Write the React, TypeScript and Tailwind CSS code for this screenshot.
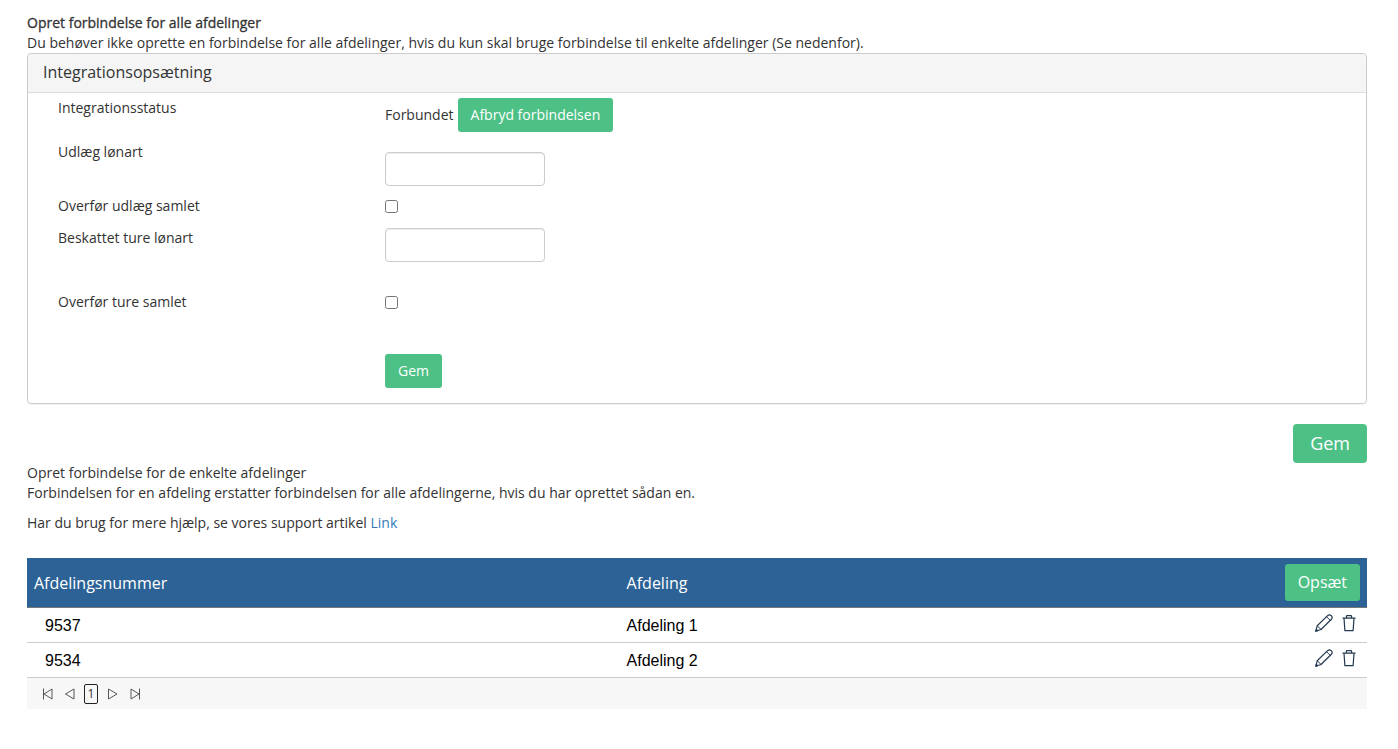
import type { ReactNode } from 'react';

const departments = [
  { id: '9537', name: 'Afdeling 1' },
  { id: '9534', name: 'Afdeling 2' },
];

const inputClass =
  'block h-[34px] w-40 rounded border border-[#cccccc] bg-white px-3 shadow-[inset_0_1px_1px_rgba(0,0,0,0.075)]';

const pagerClass = 'flex h-5 w-[14px] items-center justify-center text-[#444444]';

interface FormRowProps {
  label?: string;
  htmlFor?: string;
  className?: string;
  children: ReactNode;
}

function FormRow({ label, htmlFor, className = '', children }: FormRowProps) {
  return (
    <div className={`grid grid-cols-4 ${className}`}>
      <div className="px-[15px]">
        {htmlFor ? <label htmlFor={htmlFor}>{label}</label> : label}
      </div>
      <div className="col-span-3 px-[15px]">{children}</div>
    </div>
  );
}

function PencilIcon() {
  return (
    <svg width="18" height="18" viewBox="0 0 18 18" fill="none" stroke="#24384f" strokeWidth="1.2" strokeLinejoin="round" strokeLinecap="round">
      <path d="M0.8 17.2 2.2 11.8 12.6 1.6Q14.4 0 16.3 1.6 18 3.4 16.4 5.3L6 15.5Z" />
      <path d="M2.4 11.9 6 15.4M11.6 2.8 15.2 6.4" strokeWidth="1" />
      <path d="M0.9 17.1 1.4 15.4 2.6 16.6Z" fill="#24384f" />
    </svg>
  );
}

function TrashIcon() {
  return (
    <svg width="14" height="18" viewBox="0 0 14 18" fill="none" stroke="#24384f" strokeWidth="1.2" strokeLinejoin="round">
      <path d="M0.5 4.2H13.5M4.4 4V2.5Q4.4 1.7 5.2 1.7H8.8Q9.6 1.7 9.6 2.5V4" />
      <path d="M2 4.3 2.9 16.6H11.1L12 4.3" />
    </svg>
  );
}

function PagerIcon({ d }: { d: string }) {
  return (
    <svg width="12" height="12" viewBox="0 0 12 12" fill="none" stroke="currentColor" strokeWidth="0.9">
      <path d={d} />
    </svg>
  );
}

export default function App() {
  return (
    <main className="pt-[13px] pr-[31px] pb-10 pl-[27px] font-['Open_Sans',sans-serif] text-sm leading-5 text-[#333333]">
      <h1 className="font-medium [-webkit-text-stroke:0.3px]">Opret forbindelse for alle afdelinger</h1>
      <p>
        Du behøver ikke oprette en forbindelse for alle afdelinger, hvis du kun skal bruge forbindelse til enkelte afdelinger (Se nedenfor).
      </p>

      {/* Integration settings */}
      <section className="rounded border border-[#cccccc] shadow-[0_1px_1px_rgba(0,0,0,0.05)]">
        <h2 className="rounded-t border-b border-[#dddddd] bg-[#f5f5f5] px-[15px] pt-[7px] pb-[9px] text-base leading-[22px]">
          Integrationsopsætning
        </h2>
        <form className="px-[15px] pt-[5px] pb-[15px]" onSubmit={(e) => e.preventDefault()}>
          <FormRow label="Integrationsstatus" className="pb-[10px]">
            <div className="flex items-center gap-1">
              <span>Forbundet</span>
              <button type="button" className="h-[34px] rounded-[3px] bg-[#4dc185] px-[13px] text-white">
                Afbryd forbindelsen
              </button>
            </div>
          </FormRow>
          <FormRow label="Udlæg lønart" htmlFor="expense-type" className="pb-[10px]">
            <input id="expense-type" type="text" className={`mt-[10px] ${inputClass}`} />
          </FormRow>
          <FormRow label="Overfør udlæg samlet" htmlFor="expense-total" className="pb-3">
            <input id="expense-total" type="checkbox" className="mt-1 block h-[13px] w-[13px]" />
          </FormRow>
          <FormRow label="Beskattet ture lønart" htmlFor="trip-type" className="pb-[30px]">
            <input id="trip-type" type="text" className={inputClass} />
          </FormRow>
          <FormRow label="Overfør ture samlet" htmlFor="trip-total" className="pb-[42px]">
            <input id="trip-total" type="checkbox" className="mt-1 block h-[13px] w-[13px]" />
          </FormRow>
          <FormRow>
            <button type="submit" className="block h-[34px] rounded-[3px] bg-[#4dc185] px-[13px] text-white">
              Gem
            </button>
          </FormRow>
        </form>
      </section>

      <div className="mt-5 flex justify-end">
        <button type="button" className="h-[39px] rounded bg-[#4dc185] px-[17px] pb-[2px] text-lg leading-6 text-white">
          Gem
        </button>
      </div>

      <p>Opret forbindelse for de enkelte afdelinger</p>
      <p>Forbindelsen for en afdeling erstatter forbindelsen for alle afdelingerne, hvis du har oprettet sådan en.</p>
      <p className="mt-[10px]">
        Har du brug for mere hjælp, se vores support artikel <a href="#" className="text-[#337ab7]">Link</a>
      </p>

      {/* Departments */}
      <table className="mt-[25px] w-full table-fixed border-separate border-spacing-0 text-left text-base">
        <thead>
          <tr className="h-[50px] bg-[#2c6296] text-white">
            <th scope="col" className="w-[44%] border-b border-[#777777] px-[7px] font-normal">Afdelingsnummer</th>
            <th scope="col" className="border-b border-[#777777] px-[10px] font-normal">Afdeling</th>
            <th scope="col" className="w-28 border-b border-[#777777] px-[7px] text-right font-normal">
              <button type="button" className="h-[37px] rounded-[3px] bg-[#4dc185] px-[13px] pb-[2px] text-white">
                Opsæt
              </button>
            </th>
          </tr>
        </thead>
        <tbody>
          {departments.map((department) => (
            <tr key={department.id} className="h-[35px] font-['Liberation_Sans',sans-serif] text-black">
              <td className="border-b border-[#cccccc] pt-[2px] pl-[18px]">{department.id}</td>
              <td className="border-b border-[#cccccc] pt-[2px] pl-[10px]">{department.name}</td>
              <td className="border-b border-[#cccccc] pr-[11px] pb-1">
                <div className="flex items-center justify-end gap-[9px]">
                  <button type="button" aria-label="Rediger"><PencilIcon /></button>
                  <button type="button" aria-label="Slet"><TrashIcon /></button>
                </div>
              </td>
            </tr>
          ))}
        </tbody>
      </table>
      <nav aria-label="Sider" className="flex h-[31px] items-center gap-2 bg-[#f7f7f7] pl-[13px]">
        <button type="button" aria-label="Første side" className={pagerClass}>
          <PagerIcon d="M2.5 0.5V11.5M11 1V11L3 6Z" />
        </button>
        <button type="button" aria-label="Forrige side" className={pagerClass}>
          <PagerIcon d="M11 1V11L2.5 6Z" />
        </button>
        <button type="button" aria-current="page" className="h-5 w-[14px] rounded-xs border border-[#222222] text-xs leading-[18px]">
          1
        </button>
        <button type="button" aria-label="Næste side" className={pagerClass}>
          <PagerIcon d="M1.5 1V11L10 6Z" />
        </button>
        <button type="button" aria-label="Sidste side" className={pagerClass}>
          <PagerIcon d="M10.5 0.5V11.5M2 1V11L10 6Z" />
        </button>
      </nav>
    </main>
  );
}
